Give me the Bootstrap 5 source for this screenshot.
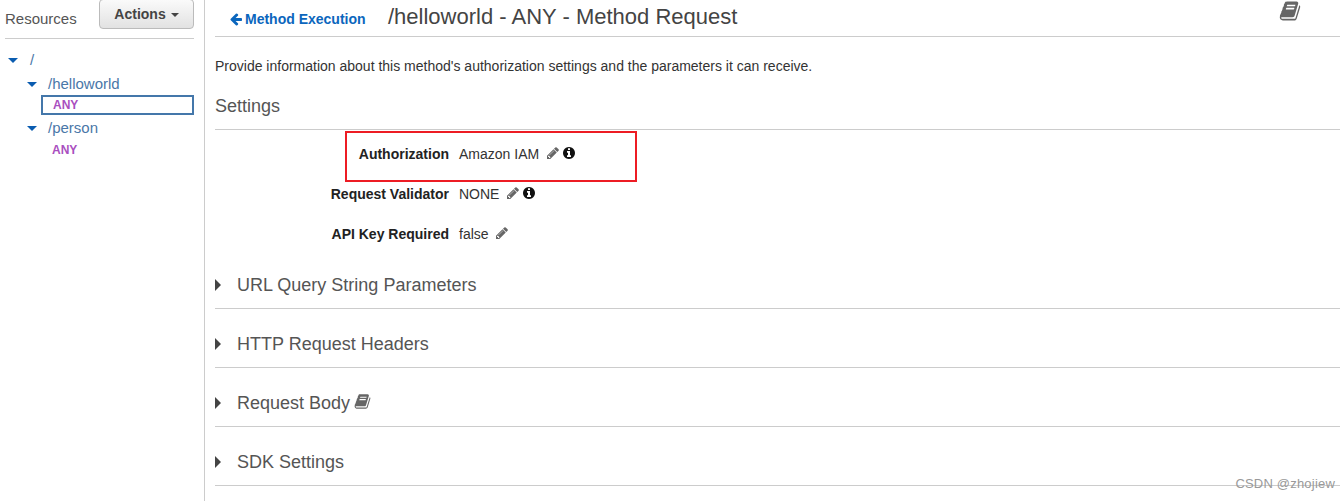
<!DOCTYPE html>
<html lang="en">
<head>
  <meta charset="UTF-8">
  <meta name="viewport" content="width=device-width, initial-scale=1.0">
  <title>Method Request</title>
  <link href="https://cdn.jsdelivr.net/npm/bootstrap@5.3.0/dist/css/bootstrap.min.css" rel="stylesheet">
  <style>
    html, body { height: 501px; overflow: hidden; }
    body { font-family: "Liberation Sans", Arial, sans-serif; font-size: 14px; color: #333; background: #fff; position: relative; }
    .page-wrap { height: 501px; }
    .res-side { width: 205px; flex: none; border-right: 1px solid #ccc; padding: 0 10px 0 5px; }
    .res-head { height: 39px; border-bottom: 1px solid #ccc; }
    .res-title { font-size: 15px; color: #555; padding-top: 10px; line-height: 18px; }
    .btn.act-btn { width: 95px; height: 30px; margin-top: -1px; padding: 0; font-size: 14px; font-weight: 700; color: #444; border: 1px solid #bbb; border-radius: 4px; background: linear-gradient(#fafafa, #e2e2e2); line-height: 28px; }
    .act-caret { display: inline-block; border: 4px solid transparent; border-top-color: #444; border-bottom: 0; margin-left: 5px; vertical-align: 2px; }
    .tree-row { font-size: 15px; line-height: 20px; color: #4a77a8; }
    .tree-top { margin-top: 11px; }
    .tree-sub { margin-top: 4px; }
    .tree-sub2 { margin-top: 3px; }
    .tree-caret { display: inline-block; border: 5px solid transparent; border-top: 5px solid #0a5cb0; border-bottom: 0; vertical-align: 3px; }
    .caret-top { margin-left: 3px; }
    .caret-sub { margin-left: 22px; }
    .tree-name { margin-left: 11px; }
    .tree-name-top { margin-left: 12px; }
    .any-lbl { font-size: 12px; font-weight: 700; color: #a94fc0; line-height: 16px; }
    .any-sel { height: 20px; margin: 1px 0 0 36px; border: 2px solid #4477aa; padding-left: 10px; line-height: 16px; }
    .any-plain { margin: 4px 0 0 47px; }
    .main-pane { padding-left: 10px; min-width: 0; }
    .top-bar { height: 37px; border-bottom: 1px solid #ccc; position: relative; }
    .back-link { font-size: 14px; font-weight: 700; color: #0b66bd; text-decoration: none; margin-left: 14px; width: 159px; flex: none; padding-top: 10px; line-height: 18px; }
    .back-link svg { vertical-align: -2px; margin-right: 2px; }
    .page-title { font-size: 22px; font-weight: 400; color: #444; margin: 0; padding-top: 4px; line-height: 26px; }
    .doc-top { position: absolute; right: 39px; top: 0; }
    .intro-text { margin: 0; padding-top: 20px; line-height: 18px; color: #333; }
    .set-title { font-size: 18px; color: #555; height: 45px; padding-top: 11px; line-height: 21px; border-bottom: 1px solid #ccc; margin-top: 10px; }
    .set-grid { height: 125px; padding-top: 14px; }
    .set-row { height: 40px; line-height: 20px; }
    .set-key { width: 234px; flex: none; text-align: right; font-weight: 700; color: #222; font-size: 14px; }
    .set-val { margin-left: 10px; color: #333; }
    .set-val svg { vertical-align: -1px; }
    .set-val svg.ico-i { margin-left: 1px; }
    .fold-row { height: 59px; border-bottom: 1px solid #ccc; font-size: 18px; color: #555; line-height: 21px; padding-top: 25px; flex: none; }
    .fold-row.first { height: 54px; padding-top: 20px; }
    .fold-row svg { vertical-align: -1px; margin-left: -1px; }
    .fold-caret { display: inline-block; width: 22px; }
    .fold-caret i { display: inline-block; border: 6px solid transparent; border-left-color: #444; border-right: 0; }
    .red-box { position: absolute; left: 345px; top: 131px; width: 292px; height: 51px; border: 2px solid #ed1c24; }
    .csdn-mark { position: absolute; right: 5px; top: 477px; font-size: 13px; letter-spacing: .2px; color: #999; line-height: 14px; }
  </style>
</head>
<body>
  <svg width="0" height="0" class="d-none">
    <symbol id="ico-pencil" viewBox="0 0 1792 1792"><path d="M363 1536l91-91-235-235-91 91v107h128v128h107zm523-928q0-22-22-22-10 0-17 7l-542 542q-7 7-7 17 0 22 22 22 10 0 17-7l542-542q7-7 7-17zm-54-192l416 416-832 832h-416v-416zm683 96q0 53-37 90l-166 166-416-416 166-165q36-38 90-38 53 0 91 38l235 234q37 39 37 91z"/></symbol>
    <symbol id="ico-info" viewBox="0 0 1792 1792"><path d="M1152 1376v-160q0-14-9-23t-23-9h-96v-512q0-14-9-23t-23-9h-320q-14 0-23 9t-9 23v160q0 14 9 23t23 9h96v320h-96q-14 0-23 9t-9 23v160q0 14 9 23t23 9h448q14 0 23-9t9-23zm-128-896v-160q0-14-9-23t-23-9h-192q-14 0-23 9t-9 23v160q0 14 9 23t23 9h192q14 0 23-9t9-23zm640 416q0 209-103 385.500t-279.500 279.500-385.500 103-385.500-103-279.500-279.500-103-385.500 103-385.500 279.500-279.500 385.500-103 385.500 103 279.500 279.500 103 385.500z"/></symbol>
    <symbol id="ico-book" viewBox="0 0 1792 1792"><path d="M1703 478q40 57 18 129l-275 906q-19 64-76.500 107.500t-122.500 43.500h-923q-77 0-148.500-53.500t-99.500-131.500q-24-67-2-127 0-4 3-27t4-37q1-8-3-21.500t-3-19.500q2-11 8-21t16.500-23.500 16.500-23.500q23-38 45-91.500t30-91.500q3-10 .5-30t-.5-28q3-11 17-28t17-23q21-36 42-92t25-90q1-9-2.500-32t.5-28q4-13 22-30.500t22-22.500q19-26 42.500-84.500t27.500-96.500q1-8-3-25.500t-2-26.500q2-8 9-18t18-23 17-21q8-12 16.500-30.500t15-35 16-36 19.500-32 26.500-23.500 36-11.500 47.500 5.500l-1 3q38-9 51-9h761q74 0 114 56t18 130l-274 906q-36 119-71.500 153.500t-128.500 34.500h-869q-27 0-38 15-11 16-1 43 24 70 144 70h923q29 0 56-15.500t35-41.500l300-987q7-22 5-57 38 15 59 43zm-1064 2q-4 13 2 22.500t20 9.500h608q13 0 25.500-9.500t16.500-22.500l21-64q4-13-2-22.500t-20-9.500h-608q-13 0-25.500 9.500t-16.500 22.500zm-83 256q-4 13 2 22.500t20 9.500h608q13 0 25.500-9.500t16.500-22.500l21-64q4-13-2-22.500t-20-9.500h-608q-13 0-25.500 9.500t-16.500 22.500z"/></symbol>
    <symbol id="ico-back" viewBox="0 0 1792 1792"><path d="M1664 896v128q0 53-32.500 90.500t-84.500 37.500h-704l293 294q38 36 38 90t-38 90l-75 76q-37 37-90 37-52 0-91-37l-651-652q-37-37-37-90 0-52 37-91l651-650q38-38 91-38 52 0 90 38l75 74q38 38 38 91t-38 91l-293 293h704q52 0 84.500 37.500t32.500 90.500z"/></symbol>
  </svg>

  <div class="d-flex page-wrap">
    <!-- Resource tree -->
    <div class="res-side">
      <div class="res-head d-flex justify-content-between">
        <div class="res-title">Resources</div>
        <button type="button" class="btn act-btn">Actions<span class="act-caret"></span></button>
      </div>
      <div class="tree-row tree-top d-flex align-items-center"><span class="tree-caret caret-top"></span><span class="tree-name-top">/</span></div>
      <div class="tree-row tree-sub d-flex align-items-center"><span class="tree-caret caret-sub"></span><span class="tree-name">/helloworld</span></div>
      <div class="any-lbl any-sel">ANY</div>
      <div class="tree-row tree-sub2 d-flex align-items-center"><span class="tree-caret caret-sub"></span><span class="tree-name">/person</span></div>
      <div class="any-lbl any-plain">ANY</div>
    </div>

    <!-- Method request -->
    <div class="main-pane flex-grow-1">
      <div class="top-bar d-flex">
        <a href="#" class="back-link"><svg width="14" height="14" fill="#0b66bd"><use href="#ico-back"/></svg>Method Execution</a>
        <h1 class="page-title">/helloworld - ANY - Method Request</h1>
        <svg class="doc-top" width="22" height="22" fill="#666"><use href="#ico-book"/></svg>
      </div>
      <p class="intro-text">Provide information about this method's authorization settings and the parameters it can receive.</p>
      <div class="set-title">Settings</div>
      <div class="set-grid">
        <div class="set-row d-flex">
          <div class="set-key">Authorization</div>
          <div class="set-val">Amazon IAM <svg class="ms-1" width="14" height="14" fill="#666"><use href="#ico-pencil"/></svg><svg class="ico-i" width="14" height="14" fill="#111"><use href="#ico-info"/></svg></div>
        </div>
        <div class="set-row d-flex">
          <div class="set-key">Request Validator</div>
          <div class="set-val">NONE <svg class="ms-1" width="14" height="14" fill="#666"><use href="#ico-pencil"/></svg><svg class="ico-i" width="14" height="14" fill="#111"><use href="#ico-info"/></svg></div>
        </div>
        <div class="set-row d-flex">
          <div class="set-key">API Key Required</div>
          <div class="set-val">false <svg class="ms-1" width="14" height="14" fill="#666"><use href="#ico-pencil"/></svg></div>
        </div>
      </div>
      <div class="fold-row first"><span class="fold-caret"><i></i></span>URL Query String Parameters</div>
      <div class="fold-row"><span class="fold-caret"><i></i></span>HTTP Request Headers</div>
      <div class="fold-row"><span class="fold-caret"><i></i></span>Request Body <svg width="17" height="17" fill="#666"><use href="#ico-book"/></svg></div>
      <div class="fold-row"><span class="fold-caret"><i></i></span>SDK Settings</div>
    </div>
  </div>

  <div class="red-box"></div>
  <div class="csdn-mark">CSDN @zhojiew</div>

  <script src="https://cdn.jsdelivr.net/npm/bootstrap@5.3.0/dist/js/bootstrap.bundle.min.js"></script>
</body>
</html>
